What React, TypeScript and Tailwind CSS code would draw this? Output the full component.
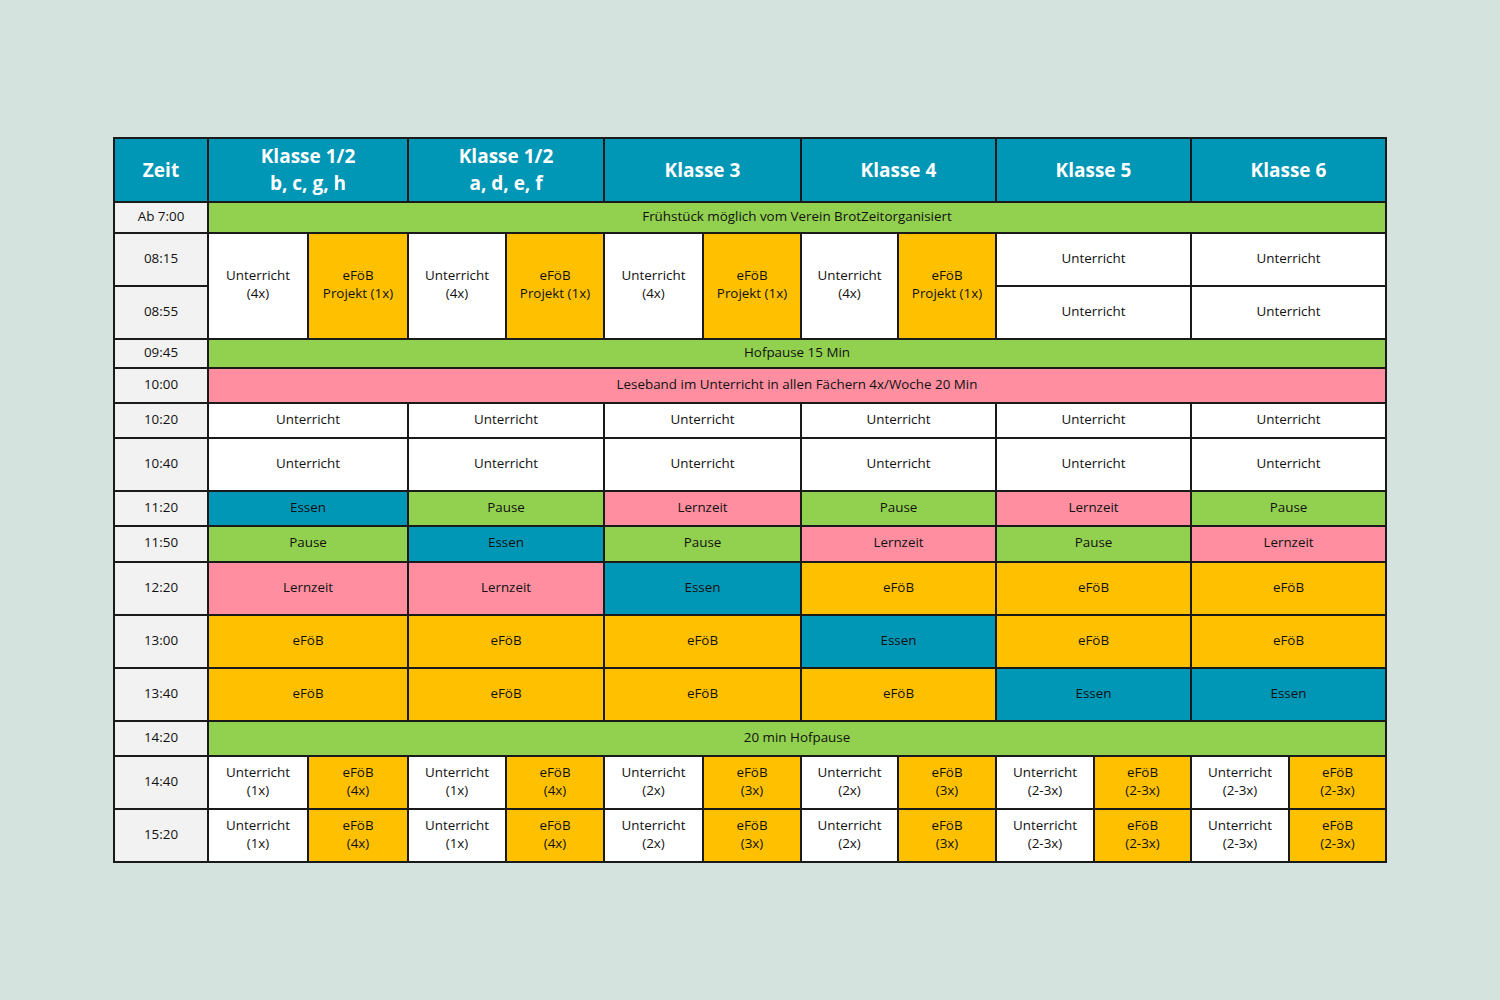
const C = {
  head: "bg-[#0096b6]",
  green: "bg-[#92d050]",
  orange: "bg-[#ffc000]",
  pink: "bg-[#ff8fa0]",
  teal: "bg-[#0096b6]",
  white: "bg-white",
};

type Cell = { t: string; c: string; span?: number; rows?: number };

const colWidths = [94, 100, 100, 98, 98, 99, 98, 97, 98, 98, 97, 98, 97];

const six = (c: string[], t: string[]): Cell[] => t.map((x, i) => ({ t: x, c: c[i], span: 2 }));

const rows: { time: string; h: number; cells: Cell[] }[] = [
  {
    time: "Ab 7:00",
    h: 31,
    cells: [{ t: "Frühstück möglich vom Verein BrotZeitorganisiert", c: C.green, span: 12 }],
  },
  {
    time: "08:15",
    h: 53,
    cells: [
      ...[0, 1, 2, 3].flatMap(() => [
        { t: "Unterricht\n(4x)", c: C.white, rows: 2 },
        { t: "eFöB\nProjekt (1x)", c: C.orange, rows: 2 },
      ]),
      { t: "Unterricht", c: C.white, span: 2 },
      { t: "Unterricht", c: C.white, span: 2 },
    ],
  },
  {
    time: "08:55",
    h: 53,
    cells: [
      { t: "Unterricht", c: C.white, span: 2 },
      { t: "Unterricht", c: C.white, span: 2 },
    ],
  },
  { time: "09:45", h: 29, cells: [{ t: "Hofpause 15 Min", c: C.green, span: 12 }] },
  {
    time: "10:00",
    h: 35,
    cells: [{ t: "Leseband im Unterricht in allen Fächern 4x/Woche 20 Min", c: C.pink, span: 12 }],
  },
  { time: "10:20", h: 35, cells: six(Array(6).fill(C.white), Array(6).fill("Unterricht")) },
  { time: "10:40", h: 53, cells: six(Array(6).fill(C.white), Array(6).fill("Unterricht")) },
  {
    time: "11:20",
    h: 35,
    cells: six(
      [C.teal, C.green, C.pink, C.green, C.pink, C.green],
      ["Essen", "Pause", "Lernzeit", "Pause", "Lernzeit", "Pause"]
    ),
  },
  {
    time: "11:50",
    h: 36,
    cells: six(
      [C.green, C.teal, C.green, C.pink, C.green, C.pink],
      ["Pause", "Essen", "Pause", "Lernzeit", "Pause", "Lernzeit"]
    ),
  },
  {
    time: "12:20",
    h: 53,
    cells: six(
      [C.pink, C.pink, C.teal, C.orange, C.orange, C.orange],
      ["Lernzeit", "Lernzeit", "Essen", "eFöB", "eFöB", "eFöB"]
    ),
  },
  {
    time: "13:00",
    h: 53,
    cells: six(
      [C.orange, C.orange, C.orange, C.teal, C.orange, C.orange],
      ["eFöB", "eFöB", "eFöB", "Essen", "eFöB", "eFöB"]
    ),
  },
  {
    time: "13:40",
    h: 53,
    cells: six(
      [C.orange, C.orange, C.orange, C.orange, C.teal, C.teal],
      ["eFöB", "eFöB", "eFöB", "eFöB", "Essen", "Essen"]
    ),
  },
  { time: "14:20", h: 35, cells: [{ t: "20 min Hofpause", c: C.green, span: 12 }] },
];

const freq = ["1x", "1x", "2x", "2x", "2-3x", "2-3x"];
const efoeb = ["4x", "4x", "3x", "3x", "2-3x", "2-3x"];
const afternoon = (): Cell[] =>
  freq.flatMap((f, i) => [
    { t: `Unterricht\n(${f})`, c: C.white },
    { t: `eFöB\n(${efoeb[i]})`, c: C.orange },
  ]);

rows.push({ time: "14:40", h: 53, cells: afternoon() });
rows.push({ time: "15:20", h: 53, cells: afternoon() });

const headers = ["Klasse 1/2\nb, c, g, h", "Klasse 1/2\na, d, e, f", "Klasse 3", "Klasse 4", "Klasse 5", "Klasse 6"];

export default function App() {
  return (
    <div
      className="w-[1500px] h-[1000px] bg-[#d5e3de] pt-[137px] pl-[113px]"
      style={{ fontFamily: '"Open Sans", "Noto Sans", sans-serif' }}
    >
      <table className="table-fixed border-collapse w-[1274px] border-2 border-[#1a1a1a] text-[13.4px] leading-[18px] text-[#111]">
        <colgroup>
          {colWidths.map((w, i) => (
            <col key={i} style={{ width: w }} />
          ))}
        </colgroup>
        <thead>
          <tr className="h-[64px]">
            <th className={`${C.head} border-2 border-[#1a1a1a] text-white text-[19px] leading-[27px] font-bold`}>Zeit</th>
            {headers.map((h) => (
              <th
                key={h}
                colSpan={2}
                className={`${C.head} border-2 border-[#1a1a1a] text-white text-[19px] leading-[27px] font-bold whitespace-pre-line`}
              >
                {h}
              </th>
            ))}
          </tr>
        </thead>
        <tbody>
          {rows.map((r) => (
            <tr key={r.time} style={{ height: r.h }}>
              <td className="bg-[#f2f2f2] border-2 border-[#1a1a1a] text-center p-0 pb-[4px]">{r.time}</td>
              {r.cells.map((c, i) => (
                <td
                  key={i}
                  colSpan={c.span}
                  rowSpan={c.rows}
                  className={`${c.c} border-2 border-[#1a1a1a] text-center align-middle p-0 pb-[4px] whitespace-pre-line`}
                >
                  {c.t}
                </td>
              ))}
            </tr>
          ))}
        </tbody>
      </table>
    </div>
  );
}
